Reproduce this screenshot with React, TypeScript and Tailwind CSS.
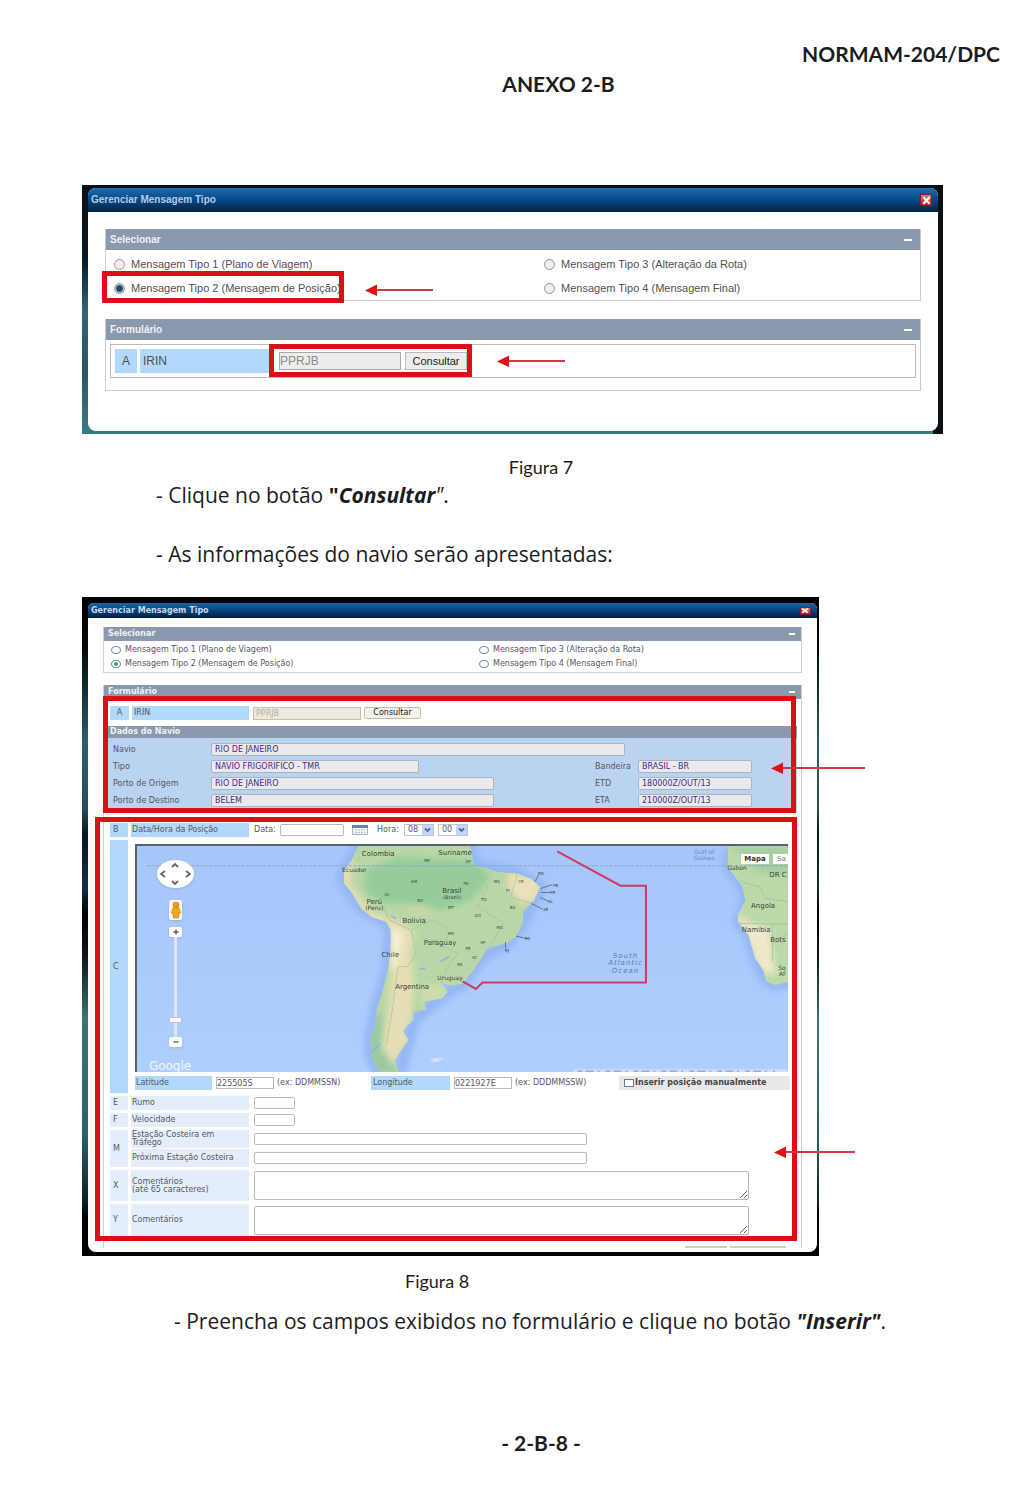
import React, { ReactNode } from "react";

const ARIAL = "font-['Liberation_Sans',Arial,sans-serif]";
const WIDE = "font-['DejaVu_Sans',Verdana,sans-serif]";

function Arrow({ className = "" }: { className?: string }) {
  return (
    <div aria-hidden className={"pointer-events-none flex h-3 items-center " + className}>
      <svg viewBox="0 0 12 12" className="h-3 w-3 shrink-0">
        <path d="M0 6.500 12 0.500V12Z" fill="#e01018" />
      </svg>
      <div className="h-[2px] grow bg-[#cf3a42]" />
    </div>
  );
}

function RedFrame({ className }: { className: string }) {
  return <div aria-hidden className={"pointer-events-none absolute border-5 border-[#db1016] " + className} />;
}

function CloseButton({ className }: { className: string }) {
  return (
    <button
      aria-label="Fechar"
      className={"flex items-center justify-center border border-[#8c1a22] bg-linear-to-b from-[#e0757a] to-[#b8121c] " + className}
    >
      <svg viewBox="0 0 10 8" className="h-[90%] w-[90%] shrink-0" preserveAspectRatio="none">
        <path d="M1.500 1 8.500 7M8.500 1 1.500 7" stroke="#fff" strokeWidth="2.2" />
      </svg>
    </button>
  );
}

function Radio({ name, label, checked, small }: { name: string; label: string; checked?: boolean; small?: boolean }) {
  return (
    <label className={"flex items-center " + (small ? "gap-1" : "gap-[6px]")}>
      <input
        type="radio"
        name={name}
        defaultChecked={checked}
        className={
          small
            ? "h-2 w-[10px] appearance-none rounded-full border border-[#6f8ba0] bg-white checked:border-[#4c9a80] checked:bg-[radial-gradient(#3f9a76_35%,#fff_45%)]"
            : "h-[11px] w-[11px] appearance-none rounded-full border border-[#999] bg-[#eee] checked:bg-[radial-gradient(#174a70_45%,#b9c6d2_60%)]"
        }
      />
      <span className="whitespace-nowrap">{label}</span>
    </label>
  );
}

function PanelHeader({ title, small }: { title: string; small?: boolean }) {
  return (
    <div
      className={
        "flex items-center justify-between bg-[#8a99ad] font-bold text-[#eef2f6] " +
        (small ? "h-[14px] px-1 pr-[6px]" : "h-[21px] pl-1 pr-2 text-[10px]")
      }
    >
      <h3>{title}</h3>
      <button aria-label={"Recolher " + title} className={small ? "h-[2px] w-[6px] bg-white" : "h-[2px] w-2 bg-white"} />
    </div>
  );
}

function Figure7() {
  return (
    <section
      className={
        ARIAL +
        " relative ml-[82px] mr-[81px] mt-[86px] bg-[linear-gradient(#0a1018_0%,#0a1822_30%,#2f6670_50%,#2a5660_75%,#3a7a80_100%)] pb-[3px] pl-[6px] pr-[5px] pt-[3px] text-[11px] leading-3 text-[#505050]"
      }
    >
      <div className="absolute bottom-0 right-0 top-0 w-[10px] bg-[#0c1014]" />
      <div className="relative rounded-lg bg-white">
        <div className="flex h-[24px] items-center justify-between rounded-t-lg bg-linear-to-b from-[#1f6cae] via-[#064786] to-[#042444] pl-[3px] pr-[6px]">
          <h2 className="text-[10px] font-bold text-[#b6cbe0]">Gerenciar Mensagem Tipo</h2>
          <CloseButton className="h-3 w-3" />
        </div>
        <div className="px-[17px] pb-10 pt-[17px]">
          <fieldset className="border border-t-0 border-[#c9cdd3]">
            <PanelHeader title="Selecionar" />
            <div className="grid grid-cols-[430px_1fr] gap-y-3 px-2 pb-[6px] pt-2">
              <Radio name="tipo7" label="Mensagem Tipo 1 (Plano de Viagem)" />
              <Radio name="tipo7" label="Mensagem Tipo 3 (Alteração da Rota)" />
              <div className="relative flex items-center">
                <Radio name="tipo7" label="Mensagem Tipo 2 (Mensagem de Posição)" checked />
                <RedFrame className="-left-3 -top-[11px] h-8 w-[242px]" />
                <Arrow className="absolute left-[251px] top-[2px] w-[68px]" />
              </div>
              <Radio name="tipo7" label="Mensagem Tipo 4 (Mensagem Final)" />
            </div>
          </fieldset>
          <section className="mt-[18px] border border-t-0 border-[#c9cdd3]">
            <PanelHeader title="Formulário" />
            <div className="mx-1 mb-3 mt-1 flex items-center border border-[#bbb] p-1 text-xs">
              <div className="flex h-6 w-[22px] items-center justify-center bg-[#b0d9fb]">A</div>
              <label htmlFor="irin7" className="ml-[3px] flex h-6 w-[130px] items-center bg-[#b0d9fb] pl-[3px]">
                IRIN
              </label>
              <div className="relative flex items-center gap-1 pl-[9px]">
                <input
                  id="irin7"
                  readOnly
                  value="PPRJB"
                  className="h-[18px] w-[122px] border border-[#a8a8a8] bg-[#ededed] text-[#8c8c8c]"
                />
                <button className="h-[18px] w-[62px] border border-[#bbb] bg-[#ededed] text-[11px] text-[#222]">Consultar</button>
                <RedFrame className="-left-px -top-2 h-[33px] w-[203px]" />
              </div>
              <Arrow className="ml-[30px] w-[68px]" />
            </div>
          </section>
        </div>
      </div>
    </section>
  );
}

const LAND = "#b9d7a6";

const MAP_LABELS: { x: number; y: number; t: string; s?: number; c?: string }[] = [
  { x: 242, y: 11, t: "Colombia", s: 7 },
  { x: 319, y: 10, t: "Suriname", s: 7 },
  { x: 218, y: 27, t: "Ecuador", s: 6 },
  { x: 316, y: 48, t: "Brasil", s: 7 },
  { x: 316, y: 54, t: "(Brazil)", s: 5 },
  { x: 238, y: 59, t: "Perú", s: 7 },
  { x: 238, y: 65, t: "(Peru)", s: 6 },
  { x: 278, y: 78, t: "Bolivia", s: 7 },
  { x: 304, y: 100, t: "Paraguay", s: 7 },
  { x: 254, y: 112, t: "Chile", s: 7 },
  { x: 314, y: 135, t: "Uruguay", s: 6 },
  { x: 276, y: 144, t: "Argentina", s: 7 },
  { x: 291, y: 17, t: "RR", s: 4 },
  { x: 332, y: 18, t: "AP", s: 4 },
  { x: 278, y: 38, t: "AM", s: 4 },
  { x: 330, y: 40, t: "PA", s: 4 },
  { x: 361, y: 38, t: "MA", s: 4 },
  { x: 385, y: 38, t: "CE", s: 4 },
  { x: 372, y: 47, t: "PI", s: 4 },
  { x: 251, y: 51, t: "AC", s: 4 },
  { x: 284, y: 57, t: "RO", s: 4 },
  { x: 348, y: 56, t: "TO", s: 4 },
  { x: 315, y: 64, t: "MT", s: 4 },
  { x: 377, y: 64, t: "BA", s: 4 },
  { x: 342, y: 72, t: "GO", s: 4 },
  { x: 364, y: 84, t: "MG", s: 4 },
  { x: 315, y: 90, t: "MS", s: 4 },
  { x: 347, y: 99, t: "SP", s: 4 },
  { x: 332, y: 105, t: "PR", s: 4 },
  { x: 339, y: 114, t: "SC", s: 4 },
  { x: 324, y: 121, t: "RS", s: 4 },
  { x: 405, y: 30, t: "RN", s: 4 },
  { x: 420, y: 42, t: "PB", s: 4 },
  { x: 417, y: 49, t: "PE", s: 4 },
  { x: 415, y: 58, t: "AL", s: 4 },
  { x: 410, y: 66, t: "SE", s: 4 },
  { x: 392, y: 95, t: "ES", s: 4 },
  { x: 371, y: 107, t: "RJ", s: 4 },
  { x: 569, y: 9, t: "Gulf of", s: 6, c: "#6c8ab8" },
  { x: 569, y: 15, t: "Guinea", s: 6, c: "#6c8ab8" },
  { x: 602, y: 25, t: "Gabon", s: 6 },
  { x: 643, y: 32, t: "DR C", s: 7 },
  { x: 628, y: 63, t: "Angola", s: 7 },
  { x: 621, y: 87, t: "Namibia", s: 7 },
  { x: 643, y: 97, t: "Bots", s: 7 },
  { x: 647, y: 125, t: "So", s: 6 },
  { x: 647, y: 131, t: "Af", s: 6 },
];

function MapDrawing() {
  return (
    <svg
      viewBox="0 0 653 228"
      preserveAspectRatio="xMidYMid slice"
      className="absolute inset-0 h-full w-full font-['DejaVu_Sans',sans-serif]"
      role="img"
      aria-label="Mapa da América do Sul e Atlântico Sul"
    >
      <defs>
        <linearGradient id="sea" x1="0" y1="0" x2="0" y2="1">
          <stop offset="0" stopColor="#a6c6fa" />
          <stop offset="1" stopColor="#aecffe" />
        </linearGradient>
        <filter id="soft" x="-20%" y="-20%" width="140%" height="140%">
          <feGaussianBlur stdDeviation="9" />
        </filter>
        <clipPath id="samerica">
          <path d="M85 10 60 60 38 95V130L60 155 90 205 120 230 165 245 178 270V330L170 390 150 470 138 500 130 560 118 600 120 650 145 699H205L190 665 205 640 232 600 215 575 225 560 248 540 245 515 285 510 280 485 335 475 350 455 330 430 365 437 395 432 425 395 455 350 470 325 530 308 555 290 575 250 578 215 610 180 628 140 600 115 560 100 500 95 470 85 430 75 415 10Z" />
        </clipPath>
        <clipPath id="africa">
          <path d="M865 80 862 155 885 185 905 210 916 255 893 300V320L925 360 945 430 970 465 978 500 1005 510 1050 500V80Z" />
        </clipPath>
      </defs>
      <rect width="653" height="228" fill="url(#sea)" />
      <g transform="translate(195 -5) scale(.3333)">
        <path
          d="M85 10 38 95V130L90 205 165 245 178 270 170 390 138 500 118 600 120 650 145 699H205L232 600 248 540 285 510 350 455 395 432 455 350 530 308 575 250 628 140 560 100 430 75 415 10Z"
          fill="none"
          stroke="#94b8f5"
          strokeWidth="40"
          strokeLinejoin="round"
          filter="url(#soft)"
        />
        <g clipPath="url(#samerica)">
          <rect width="700" height="700" fill={LAND} />
          <g filter="url(#soft)">
            <path d="M100 90 200 50 430 60 480 110 420 180 330 210 230 190 150 190 100 150Z" fill="#96cc9c" />
            <path d="M240 190 300 200 290 225 230 220Z" fill="#cbd8a4" />
            <path d="M530 95 640 120 620 180 570 190 530 140Z" fill="#ebe0b8" />
            <path d="M30 90 70 60 55 130 120 215 180 235 250 270 240 350 250 440 240 530 235 600 190 670 150 650 170 520 180 400 178 270 100 230 30 140Z" fill="#e6dfb4" />
            <path d="M178 260 215 280 195 380 178 390Z" fill="#f5efd8" />
            <path d="M110 520 155 520 150 620 200 700H120L105 620Z" fill="#9cc9a0" />
            <path d="M270 440 350 430 340 480 270 500Z" fill="#cfdcaa" />
          </g>
          <path
            d="M75 60 110 30M150 190 175 240 240 270 255 340 230 380 200 380 185 500 165 620M240 270 300 240 345 260 350 300 300 300 270 290M300 300 380 340 350 380 330 430M400 70 470 140 440 200 520 250 455 350M400 330 440 345M560 100 540 170 600 190"
            fill="none"
            stroke="#a9bf98"
            strokeWidth="2"
          />
          <path d="M328 365 355 350M265 386H282M180 228 195 236M120 640 145 610" stroke="#8fb4e4" strokeWidth="5" fill="none" />
        </g>
        <path d="M612 125 625 103M630 145 665 133M630 157H660M628 172 655 184M602 190 635 207M555 288 590 296M524 306V325" stroke="#64748b" strokeWidth="3" />
        <path d="M300 660 335 657M305 665 325 663" stroke="#d8e3e8" strokeWidth="5" />
      </g>
      <g transform="translate(305 -30) scale(.3333)">
        <path d="M862 100 862 155 905 210 916 255 893 320 925 360 945 430 978 500 1005 510 1060 500" fill="none" stroke="#94b8f5" strokeWidth="34" filter="url(#soft)" />
        <g clipPath="url(#africa)">
          <rect x="850" y="80" width="200" height="440" fill="#bcd9a8" />
          <g filter="url(#soft)">
            <path d="M885 290 920 320 990 340 1000 440 1010 480 960 470 920 370Z" fill="#f0e8cb" />
            <path d="M870 90H1050V180L950 170Z" fill="#a5cf9f" />
          </g>
          <path d="M890 325 1050 328M997 328V440M997 390 1050 350M905 200 960 215 975 250 1050 260" fill="none" stroke="#a9b79a" strokeWidth="2" />
        </g>
      </g>
      <path d="M10 20.500H653" stroke="#8ea6cc" strokeWidth="1" strokeDasharray="3 1.500" />
      <g textAnchor="middle">
        {MAP_LABELS.map((l) => (
          <text key={l.t + l.x + l.y} x={l.x} y={l.y} fontSize={l.s} fill={l.c || "#3c443c"}>
            {l.t}
          </text>
        ))}
        <g fontSize="7" fontStyle="italic" fill="#5d7bb0" letterSpacing="1">
          <text x="490" y="113">South</text>
          <text x="490" y="120">Atlantic</text>
          <text x="490" y="128">Ocean</text>
        </g>
      </g>
      <path d="M421.500 6 485 40.500H510.500V137.500H346.500L340 144 326.500 136.500" fill="none" stroke="#cf3a62" strokeWidth="2" />
      <text x="12" y="225" fontSize="12" fill="#f2f7ff">
        Google
      </text>
      <path d="M438 226H653" stroke="#d0def4" strokeWidth="3" />
      <path d="M442 226.500H640" stroke="#8394b2" strokeWidth="1" strokeDasharray="5 3 8 4 2 6" />
    </svg>
  );
}

function PanButton({ label, d, className }: { label: string; d: string; className: string }) {
  return (
    <button aria-label={label} className={"flex items-center justify-center " + className}>
      <svg viewBox="0 0 10 8" className="h-2 w-[10px]">
        <path d={d} fill="none" stroke="#666" strokeWidth="1.800" />
      </svg>
    </button>
  );
}

function MapPanel() {
  return (
    <div className="relative mr-[13px] mt-1 h-[228px] overflow-hidden border-l-2 border-t-2 border-[#59616e]">
      <MapDrawing />
      <div className="absolute left-5 top-[14px] flex flex-col items-center">
        <div className="grid h-7 w-[37px] grid-cols-3 grid-rows-3 items-center rounded-[50%] bg-white shadow">
          <PanButton label="Norte" d="M2 6 5 3 8 6" className="col-start-2 row-start-1" />
          <PanButton label="Oeste" d="M7 1 3 4 7 7" className="col-start-1 row-start-2" />
          <PanButton label="Leste" d="M3 1 7 4 3 7" className="col-start-3 row-start-2" />
          <PanButton label="Sul" d="M2 2 5 5 8 2" className="col-start-2 row-start-3" />
        </div>
        <button aria-label="Street View" className="mt-3 flex h-5 w-[13px] items-center justify-center rounded-xs bg-[#fbf6ec] shadow">
          <svg viewBox="0 0 12 18" className="h-[18px] w-3">
            <circle cx="6" cy="4" r="3" fill="#eda020" stroke="#b87412" strokeWidth=".6" />
            <path d="M3 7H9L10.500 12 9 13 8.500 17H3.500L3 13 1.500 12Z" fill="#f2a51f" stroke="#b87412" strokeWidth=".6" />
          </svg>
        </button>
        <button aria-label="Aumentar zoom" className="mt-[7px] flex h-[10px] w-[13px] items-center justify-center rounded-xs bg-white shadow">
          <svg viewBox="0 0 8 8" className="h-2 w-2"><path d="M1.500 4H6.500M4 1.500V6.500" stroke="#555" strokeWidth="1.300" /></svg>
        </button>
        <input
          type="range"
          aria-label="Zoom"
          min={0}
          max={20}
          defaultValue={3}
          className="h-[100px] w-[13px] appearance-none bg-[linear-gradient(90deg,transparent_5px,#dfe6f0_5px,#dfe6f0_8px,transparent_8px)] [direction:rtl] [writing-mode:vertical-lr] [&::-webkit-slider-thumb]:h-[6px] [&::-webkit-slider-thumb]:w-[13px] [&::-webkit-slider-thumb]:appearance-none [&::-webkit-slider-thumb]:border [&::-webkit-slider-thumb]:border-[#b8c2d0] [&::-webkit-slider-thumb]:bg-white"
        />
        <button aria-label="Diminuir zoom" className="flex h-[10px] w-[13px] items-center justify-center rounded-xs bg-white shadow">
          <svg viewBox="0 0 8 8" className="h-2 w-2"><path d="M1.500 4H6.500" stroke="#555" strokeWidth="1.300" /></svg>
        </button>
      </div>
      <div className="absolute right-0 top-2 flex h-[10px] gap-1 text-[7px] leading-[10px]">
        <button className="w-7 bg-white font-bold text-[#333]">Mapa</button>
        <button className="w-[15px] overflow-hidden bg-white text-left text-[#777]"><span className="pl-1">Sa</span></button>
      </div>
    </div>
  );
}

function ShipField({ id, label, value, width, right }: { id: string; label: string; value: string; width: string; right?: boolean }) {
  return (
    <div className="flex items-center">
      <label htmlFor={id} className={right ? "w-[43px] shrink-0" : "w-[98px] shrink-0"}>
        {label}
      </label>
      <input
        id={id}
        readOnly
        value={value}
        className={"h-[13px] min-w-0 rounded-xs border border-[#a9b3c2] bg-[#ece9ea] px-[3px] text-[#3a2c8c] " + width}
      />
    </div>
  );
}

function FormRow({ code, label, htmlFor, height, strong, children }: { code: string; label: ReactNode; htmlFor?: string; height: string; strong?: boolean; children?: ReactNode }) {
  const tone = strong ? "bg-[#b0d9fb] " : "bg-[#e4eefb] ";
  return (
    <div className={"grid grid-cols-[18px_118px_1fr] gap-x-[3px] " + height}>
      <div className={tone + "flex items-center pl-[3px]"}>{code}</div>
      <label htmlFor={htmlFor} className={tone + "flex items-center pl-[1px] leading-[8px]"}>
        <span>{label}</span>
      </label>
      <div className="flex items-center pl-[2px]">{children}</div>
    </div>
  );
}

function HourSelect({ id, label, value }: { id: string; label: string; value: string }) {
  return (
    <div className="relative h-3 w-[30px]">
      <select id={id} aria-label={label} defaultValue={value} className="h-3 w-full appearance-none border border-[#bcc4d2] bg-white pl-[3px] text-[8px] leading-[10px]">
        <option>{value}</option>
      </select>
      <svg viewBox="0 0 11 10" className="pointer-events-none absolute right-px top-px h-[10px] w-[11px] bg-[#c3d5fa]">
        <path d="M3 3.500 5.500 6 8 3.500" fill="none" stroke="#4a66a8" strokeWidth="1.800" />
      </svg>
    </div>
  );
}

const field = "rounded-xs border border-[#b9b9b9] bg-white ";

function Figure8() {
  return (
    <section
      className={
        WIDE +
        " relative ml-[82px] mt-[28px] w-full max-w-[737px] bg-[linear-gradient(#000_0%,#05090e_8%,#2b6068_22%,#24505a_32%,#0a1622_36%,#123042_44%,#000_48%,#0b1416_54%,#39776f_64%,#2c6066_82%,#0b1e2a_92%,#000_94%)] pb-1 pl-[6px] pr-[2px] pt-[6px] text-[8px] leading-[10px] text-[#55585e]"
      }
    >
      <div className="rounded-b-lg rounded-t-md bg-white">
        <div className="flex h-[15px] items-center justify-between rounded-t-md bg-linear-to-b from-[#1565a8] via-[#064480] to-[#04203f] pl-[3px] pr-[6px]">
          <h2 className="text-[8px] font-bold text-[#c8d8e8]">Gerenciar Mensagem Tipo</h2>
          <CloseButton className="h-2 w-[11px]" />
        </div>
        <div className="px-[15px] pt-[9px]">
          <fieldset className="border border-t-0 border-[#cdd1d8]">
            <PanelHeader title="Selecionar" small />
            <div className="grid grid-cols-[368px_1fr] gap-y-1 px-[7px] pb-[3px] pt-1">
              <Radio small name="tipo8" label="Mensagem Tipo 1 (Plano de Viagem)" />
              <Radio small name="tipo8" label="Mensagem Tipo 3 (Alteração da Rota)" />
              <Radio small name="tipo8" label="Mensagem Tipo 2 (Mensagem de Posição)" checked />
              <Radio small name="tipo8" label="Mensagem Tipo 4 (Mensagem Final)" />
            </div>
          </fieldset>

          <section className="mt-3 border border-y-0 border-[#cdd1d8]">
            <PanelHeader title="Formulário" small />
            <div className="relative pt-[7px]">
              <div className="flex h-[14px] items-center pl-[6px]">
                <div className="flex h-full w-[19px] items-center justify-center bg-[#b0d9fb]">A</div>
                <label htmlFor="irin8" className="ml-[3px] flex h-full w-[117px] items-center bg-[#b0d9fb] pl-[2px]">
                  IRIN
                </label>
                <input id="irin8" readOnly value="PPRJB" className="ml-1 h-[13px] w-[108px] border border-[#c4c0b0] bg-[#ece9dc] px-[2px] text-[#b4b09e]" />
                <button className="ml-[3px] h-3 w-[57px] rounded-xs border border-[#c4c0b0] bg-[#f4f2ea] text-[#222]">Consultar</button>
              </div>
              <div className="ml-[3px] mr-1 mt-[6px]">
                <h3 className="flex h-3 items-center bg-[#8a99ad] pl-[3px] font-bold text-[#eef2f6]">Dados do Navio</h3>
                <div className="flex h-[75px] flex-col gap-1 bg-[#b9d3f0] pl-[6px] pr-[45px] pt-[5px]">
                  <ShipField id="navio" label="Navio" value="RIO DE JANEIRO" width="w-[414px]" />
                  <div className="flex justify-between">
                    <ShipField id="tipo" label="Tipo" value="NAVIO FRIGORIFICO - TMR" width="w-[208px]" />
                    <ShipField right id="bandeira" label="Bandeira" value="BRASIL - BR" width="w-[114px]" />
                  </div>
                  <div className="flex justify-between">
                    <ShipField id="origem" label="Porto de Origem" value="RIO DE JANEIRO" width="w-[283px]" />
                    <ShipField right id="etd" label="ETD" value="180000Z/OUT/13" width="w-[114px]" />
                  </div>
                  <div className="flex justify-between">
                    <ShipField id="destino" label="Porto de Destino" value="BELEM" width="w-[283px]" />
                    <ShipField right id="eta" label="ETA" value="210000Z/OUT/13" width="w-[114px]" />
                  </div>
                </div>
              </div>
              <RedFrame className="-left-px -top-[3px] bottom-0 right-[5px]" />
            </div>

            <div className="relative mt-1 flex flex-col gap-[3px] pb-[12px] pl-[6px] pt-[6px]">
              <FormRow strong code="B" label="Data/Hora da Posição" htmlFor="data" height="h-[14px]">
                <label htmlFor="data" className="w-[26px]">Data:</label>
                <input id="data" className={field + "h-3 w-[64px]"} />
                <button aria-label="Abrir calendário" className="ml-2">
                  <svg viewBox="0 0 16 10" className="h-[10px] w-4">
                    <path d="M0.500 1H15.500V9.500H0.500Z" fill="#eef1f6" stroke="#a8b2c4" />
                    <path d="M0 0H16V3H0Z" fill="#6a82aa" />
                    <path d="M3 5H13M3 7.500H13" stroke="#b8c0ce" strokeDasharray="2 1" />
                  </svg>
                </button>
                <label htmlFor="hora" className="ml-[9px] w-[27px]">Hora:</label>
                <HourSelect id="hora" label="Hora" value="08" />
                <div className="ml-1">
                  <HourSelect id="minuto" label="Minuto" value="00" />
                </div>
              </FormRow>

              <div className="grid grid-cols-[18px_1fr] gap-x-[7px]">
                <div className="flex items-center bg-[#b0d9fb] pl-[3px]">C</div>
                <div>
                  <MapPanel />
                  <div className="mb-[3px] mr-[11px] mt-1 flex h-[14px] items-center">
                    <label htmlFor="lat" className="flex h-full w-[77px] items-center bg-[#b0d9fb] pl-[1px]">Latitude</label>
                    <input id="lat" defaultValue="225505S" className="ml-1 h-3 w-[58px] border border-[#b9b9b9] bg-white" />
                    <span className="ml-[3px] w-[94px] whitespace-nowrap">(ex: DDMMSSN)</span>
                    <label htmlFor="lon" className="flex h-full w-[79px] items-center bg-[#b0d9fb] pl-[2px]">Longitude</label>
                    <input id="lon" defaultValue="0221927E" className="ml-1 h-3 w-[58px] border border-[#b9b9b9] bg-white" />
                    <span className="ml-[3px] whitespace-nowrap">(ex: DDDMMSSW)</span>
                    <label className="ml-auto flex h-full w-[171px] items-center gap-px bg-[#ebe7e7] pl-[5px] font-bold text-[#444]">
                      <input type="checkbox" className="h-2 w-[10px] appearance-none border border-[#5f7f9f] bg-white checked:bg-[#5f7f9f]" />
                      Inserir posição manualmente
                    </label>
                  </div>
                </div>
              </div>

              <FormRow code="E" label="Rumo" htmlFor="rumo" height="h-[14px]">
                <input id="rumo" className={field + "h-3 w-[41px]"} />
              </FormRow>
              <FormRow code="F" label="Velocidade" htmlFor="vel" height="h-[14px]">
                <input id="vel" className={field + "h-3 w-[41px]"} />
              </FormRow>
              <div className="grid grid-cols-[18px_118px_1fr] grid-rows-[18px_18px] gap-x-[3px] gap-y-px">
                <div className="row-span-2 flex items-center bg-[#e4eefb] pl-[3px]">M</div>
                <label htmlFor="trafego" className="flex items-center bg-[#e4eefb] pl-[1px] leading-[8px]">
                  Estação Costeira em
                  <br />
                  Tráfego
                </label>
                <div className="flex items-center pl-[2px]">
                  <input id="trafego" className={field + "h-3 w-[333px]"} />
                </div>
                <label htmlFor="proxima" className="flex items-center whitespace-nowrap bg-[#e4eefb] pl-[1px]">
                  Próxima Estação Costeira
                </label>
                <div className="flex items-center pl-[2px]">
                  <input id="proxima" className={field + "h-3 w-[333px]"} />
                </div>
              </div>
              <FormRow code="X" label={<>Comentários<br />(até 65 caracteres)</>} htmlFor="com65" height="h-[31px]">
                <textarea id="com65" className={field + "h-[29px] w-[495px]"} />
              </FormRow>
              <FormRow code="Y" label="Comentários" htmlFor="com" height="h-[32px]">
                <textarea id="com" className={field + "h-[29px] w-[495px]"} />
              </FormRow>
              <RedFrame className="-left-[9px] bottom-[7px] right-1 top-0" />
              <div className="absolute bottom-0 right-[15px] flex gap-[3px]">
                <div className="h-[2px] w-[42px] bg-[#cfcfc8]" />
                <div className="h-[2px] w-[56px] bg-[#cfcfc8]" />
              </div>
            </div>
          </section>
          <div className="h-1" />
        </div>
      </div>
      <Arrow className="absolute -right-[46px] top-[165px] w-[94px]" />
      <Arrow className="absolute -right-[36px] top-[549px] w-[81px]" />
    </section>
  );
}

const body = "font-['Open_Sans','Noto_Sans',sans-serif] text-[21px] ";

export default function App() {
  return (
    <main className="min-h-screen bg-white pb-[26px] font-['Lato',Carlito,Calibri,sans-serif] text-[21px] leading-[30px] text-[#1c1c1c]">
      <header className="pt-[39px] font-bold">
        <p className="pr-6 text-right">NORMAM-204/DPC</p>
        <h1 className="pl-[93px] text-center">ANEXO 2-B</h1>
      </header>
      <Figure7 />
      <p className="mt-[18px] pl-[58px] text-center text-[18px]">Figura 7</p>
      <p className={body + "-mt-[2px] pl-[156px]"}>
        - Clique no botão <b>"<i>Consultar</i></b><i>"</i>.
      </p>
      <p className={body + "mt-[29px] pl-[156px]"}>- As informações do navio serão apresentadas:</p>
      <Figure8 />
      <p className="mt-[10px] pl-[405px] text-[18px]">Figura 8</p>
      <p className={body + "mt-[10px] pl-[174px]"}>
        - Preencha os campos exibidos no formulário e clique no botão <b><i>"Inserir"</i></b>.
      </p>
      <footer className="mt-[92px] pl-[58px] text-center font-bold">- 2-B-8 -</footer>
    </main>
  );
}
